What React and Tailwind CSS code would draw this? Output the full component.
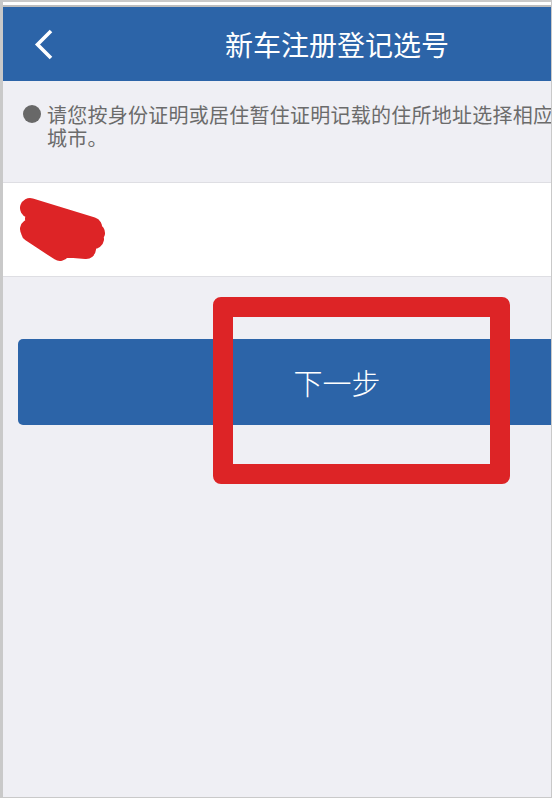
import React from 'react';

const Chevron = () => (
    <svg width="22" height="36" viewBox="0 0 22 36" className="absolute left-[31px] top-[20px]">
        <path d="M17 4 L3.5 17.5 L17 31" fill="none" stroke="#ffffff" strokeWidth="3.6" strokeLinejoin="miter" />
    </svg>
);

const Scribble = () => (
    <svg width="100" height="80" viewBox="0 0 100 80" className="ml-[7px] mt-[6px] block">
        <path
            d="M20 19 L82 38 M25 30 L85 44 M20 40 L84 50 M21 43 L50 62 M52 58 L76 60"
            fill="none"
            stroke="#dd2426"
            strokeWidth="20"
            strokeLinecap="round"
            strokeLinejoin="round"
        />
    </svg>
);

const App = () => {
    return (
        <div
            className="relative w-[552px] h-[798px] bg-[#c9c9c9] flex flex-col pt-[2px] pl-[3px] pr-[1px] pb-[1px]"
            style={{ fontFamily: '"Noto Sans CJK SC", "Noto Sans", sans-serif' }}
        >
            <div className="h-[3px] bg-white" />
            <div className="h-[2px] bg-[#bdbdbd]" />
            <div className="flex-1 overflow-hidden bg-[#efeff4]">
                <div className="w-[668px]">
                    <div className="relative h-[74px] bg-[#2c64a8] flex items-center justify-center">
                        <Chevron />
                        <h1 className="text-[28px] leading-none text-white">新车注册登记选号</h1>
                    </div>

                    <div className="flex items-start pt-[22px] pb-[33px] pl-[20px]">
                        <span className="mt-[2px] w-[18px] h-[18px] rounded-full bg-[#686868] shrink-0" />
                        <p className="ml-[6px] w-[515px] text-[20px] leading-[23px] tracking-[0.25px] text-[#6b6b6b]">
                            请您按身份证明或居住暂住证明记载的住所地址选择相应城市。
                        </p>
                    </div>

                    <div className="h-[95px] bg-white border-y border-[#dedee3]">
                        <Scribble />
                    </div>

                    <button className="mt-[62px] mx-[15px] w-[638px] h-[86px] rounded-[5px] bg-[#2c64a8] text-white text-[29px] font-light leading-none flex items-center justify-center">
                        下一步
                    </button>
                </div>
            </div>

            <div className="absolute left-[213px] top-[297px] w-[297px] h-[187px] border-[20px] border-[#dd2426] rounded-[8px]" />
        </div>
    );
};

export default App;
